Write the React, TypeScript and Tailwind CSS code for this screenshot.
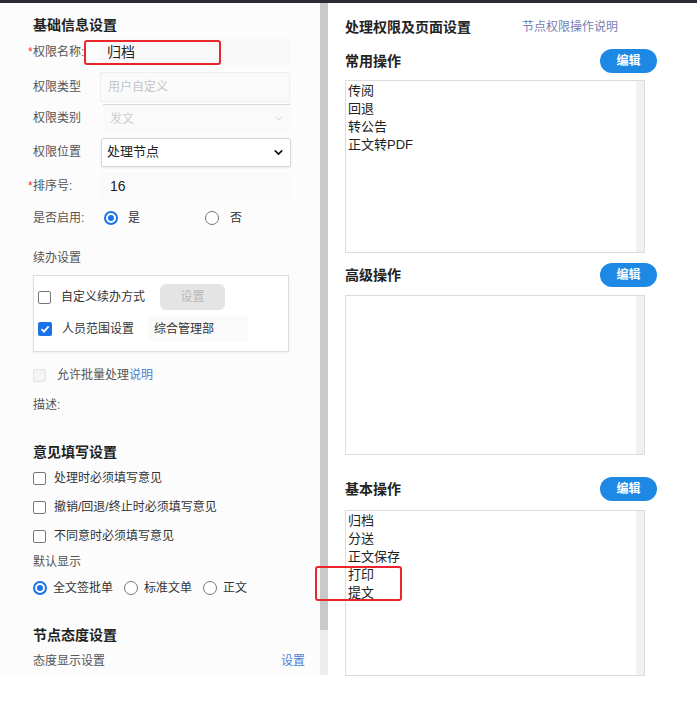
import React from "react";
import { ChevronDown } from "lucide-react";

// small form controls
const Checkbox = ({ checked = false, disabled = false }: { checked?: boolean; disabled?: boolean }) => {
  if (checked) {
    return (
      <span className="w-[14px] h-[14px] rounded-[2px] bg-[#1a73e8] flex items-center justify-center shrink-0">
        <svg width="10" height="10" viewBox="0 0 10 10">
          <path d="M1.5 5.2 L4 7.6 L8.6 2.4" stroke="#fff" strokeWidth="1.8" fill="none" />
        </svg>
      </span>
    );
  }
  return (
    <span
      className={
        disabled
          ? "w-[13px] h-[13px] rounded-[2px] border border-[#e2e2e2] bg-[#f4f4f4] shrink-0"
          : "w-[13px] h-[13px] rounded-[2px] border border-[#777] bg-white shrink-0"
      }
    />
  );
};

const Radio = ({ checked = false }: { checked?: boolean }) =>
  checked ? (
    <span className="w-[14px] h-[14px] rounded-full border-2 border-[#1a73e8] flex items-center justify-center shrink-0">
      <span className="w-[6px] h-[6px] rounded-full bg-[#1a73e8]" />
    </span>
  ) : (
    <span className="block w-[14px] h-[14px] rounded-full border border-[#777] bg-white shrink-0" />
  );

const Label = ({ children, required = false }: { children: React.ReactNode; required?: boolean }) => (
  <div className="w-[67px] shrink-0 text-[12px] text-[#555]">
    {required && <span className="inline-block w-[5px] -ml-[5px] text-[#e53935]">*</span>}
    {children}
  </div>
);

const EditButton = () => (
  <button className="w-[57px] h-[24px] rounded-full bg-[#1e88e5] text-white text-[12px] font-bold">编辑</button>
);

const OpBox = ({ items, height }: { items: string[]; height: string }) => (
  <div className={`w-[300px] ${height} border border-[#dcdcdc] bg-white flex`}>
    <div className="flex-1 pl-[2px] pt-[1px] text-[13px] leading-[18px] text-[#222]">
      {items.map((it) => (
        <div key={it}>{it}</div>
      ))}
    </div>
    <div className="w-[8px] bg-[#f1f1f3]" />
  </div>
);

const App = () => {
  return (
    <div className="relative w-[697px] h-[708px] bg-white font-[family-name:'Liberation_Sans','Noto_Sans_CJK_SC',sans-serif] text-[#333]">
      <div className="h-[3px] bg-[#2b2b33]" />

      <div className="flex h-[672px]">
        {/* left: basic info */}
        <div className="w-[320px] pl-[33px] pr-[30px] pt-[12px] bg-[#fcfcfc]">
          <div className="h-[20px] flex items-center text-[14px] font-bold text-[#222]">基础信息设置</div>

          <div className="mt-[2px] h-[30px] flex items-center">
            <Label required>权限名称:</Label>
            <div className="flex-1 h-[26px] bg-[#f8f8f8] flex items-center pl-[7px] text-[14px] text-[#222]">归档</div>
          </div>

          <div className="mt-[5px] h-[30px] flex items-center">
            <Label>权限类型</Label>
            <div className="flex-1 h-[30px] border border-[#eeeeee] bg-[#fafafa] flex items-center pl-[7px] text-[12px] text-[#c4c4c4]">
              用户自定义
            </div>
          </div>

          <div className="mt-[1px] h-[30px] flex items-center">
            <Label>权限类别</Label>
            <div className="flex-1 h-[29px] ml-[3px] border-t border-[#d8d8d8] bg-[#fafafa] flex items-center pl-[7px] pr-[6px] text-[12px] text-[#cfcfcf]">
              <span className="flex-1">发文</span>
              <ChevronDown size={11} strokeWidth={2} className="text-[#cfcfcf]" />
            </div>
          </div>

          <div className="mt-[4px] h-[30px] flex items-center">
            <Label>权限位置</Label>
            <div className="flex-1 h-[29px] ml-[1px] -mr-[1px] border border-[#d6d6d6] rounded-[2px] bg-white shadow-[0_1px_2px_rgba(0,0,0,0.08)] flex items-center pl-[5px] pr-[5px] text-[13px] text-[#222]">
              <span className="flex-1">处理节点</span>
              <ChevronDown size={13} strokeWidth={3} className="text-[#111]" />
            </div>
          </div>

          <div className="mt-[4px] h-[30px] flex items-center">
            <Label required>排序号:</Label>
            <div className="flex-1 h-[28px] bg-[#fafafa] flex items-center pl-[10px] text-[14px] text-[#222]">16</div>
          </div>

          <div className="mt-[2px] h-[30px] flex items-center">
            <Label>是否启用:</Label>
            <div className="flex items-center ml-[4px]">
              <Radio checked />
              <span className="ml-[10px] text-[12px]">是</span>
            </div>
            <div className="flex items-center ml-[65px]">
              <Radio />
              <span className="ml-[11px] text-[12px]">否</span>
            </div>
          </div>

          <div className="mt-[15px] h-[20px] flex items-center text-[12px] text-[#555]">续办设置</div>

          <div className="mt-[7px] h-[77px] w-[256px] border border-[#dddddd] bg-white shadow-[0_1px_2px_rgba(0,0,0,0.06)] pl-[4px] pt-[7px]">
            <div className="h-[28px] flex items-center">
              <Checkbox />
              <span className="ml-[10px] text-[12px]">自定义续办方式</span>
              <span className="ml-[15px] w-[65px] h-[26px] rounded-[6px] bg-[#e4e4e4] flex items-center justify-center text-[12px] text-[#b8b8b8]">
                设置
              </span>
            </div>
            <div className="mt-[4px] h-[28px] flex items-center">
              <Checkbox checked />
              <span className="ml-[10px] text-[12px]">人员范围设置</span>
              <span className="ml-[14px] w-[100px] h-[26px] bg-[#fafafa] flex items-center pl-[6px] text-[12px]">综合管理部</span>
            </div>
          </div>

          <div className="mt-[13px] h-[20px] flex items-center">
            <Checkbox disabled />
            <span className="ml-[11px] text-[12px] text-[#555]">允许批量处理</span>
            <span className="text-[12px] text-[#4a7fd6]">说明</span>
          </div>

          <div className="mt-[10px] h-[20px] flex items-center text-[12px] text-[#555]">描述:</div>

          <div className="mt-[27px] h-[20px] flex items-center text-[14px] font-bold text-[#222]">意见填写设置</div>

          <div className="mt-[4px] h-[24px] flex items-center">
            <Checkbox />
            <span className="ml-[8px] text-[12px]">处理时必须填写意见</span>
          </div>
          <div className="mt-[5px] h-[24px] flex items-center">
            <Checkbox />
            <span className="ml-[8px] text-[12px]">撤销/回退/终止时必须填写意见</span>
          </div>
          <div className="mt-[5px] h-[24px] flex items-center">
            <Checkbox />
            <span className="ml-[8px] text-[12px]">不同意时必须填写意见</span>
          </div>

          <div className="mt-[4px] h-[20px] flex items-center text-[12px] text-[#555]">默认显示</div>

          <div className="mt-[4px] h-[24px] flex items-center text-[12px]">
            <Radio checked />
            <span className="ml-[6px]">全文签批单</span>
            <span className="ml-[11px] flex">
              <Radio />
            </span>
            <span className="ml-[6px]">标准文单</span>
            <span className="ml-[11px] flex">
              <Radio />
            </span>
            <span className="ml-[6px]">正文</span>
          </div>

          <div className="mt-[25px] h-[20px] flex items-center text-[14px] font-bold text-[#222]">节点态度设置</div>

          <div className="mt-[6px] h-[20px] -mr-[15px] flex items-center justify-between text-[12px]">
            <span className="text-[#555]">态度显示设置</span>
            <span className="text-[#4a7fd6]">设置</span>
          </div>
        </div>

        {/* scrollbar */}
        <div className="w-[8px] flex flex-col">
          <div className="h-[627px] bg-[#c9c9c9]" />
          <div className="flex-1 bg-[#ededed]" />
        </div>

        {/* right: operations */}
        <div className="flex-1 pl-[17px] pt-[14px]">
          <div className="h-[20px] flex items-center">
            <span className="text-[14px] font-bold text-[#222]">处理权限及页面设置</span>
            <span className="ml-[51px] text-[12px] text-[#7480b5]">节点权限操作说明</span>
          </div>

          <div className="mt-[11px] w-[312px] h-[26px] flex items-center justify-between">
            <span className="text-[14px] font-bold text-[#222]">常用操作</span>
            <EditButton />
          </div>
          <div className="mt-[6px]">
            <OpBox items={["传阅", "回退", "转公告", "正文转PDF"]} height="h-[173px]" />
          </div>

          <div className="mt-[9px] w-[312px] h-[26px] flex items-center justify-between">
            <span className="text-[14px] font-bold text-[#222]">高级操作</span>
            <EditButton />
          </div>
          <div className="mt-[7px]">
            <OpBox items={[]} height="h-[160px]" />
          </div>

          <div className="mt-[21px] w-[312px] h-[26px] flex items-center justify-between">
            <span className="text-[14px] font-bold text-[#222]">基本操作</span>
            <EditButton />
          </div>
          <div className="mt-[8px]">
            <OpBox items={["归档", "分送", "正文保存", "打印", "提文"]} height="h-[166px]" />
          </div>
        </div>
      </div>

      {/* annotation boxes */}
      <div className="absolute left-[84px] top-[40px] w-[137px] h-[25px] border-2 border-[#e8262b] rounded-[3px]" />
      <div className="absolute left-[315px] top-[566px] w-[87px] h-[35px] border-2 border-[#e8262b] rounded-[3px]" />
    </div>
  );
};

export default App;
